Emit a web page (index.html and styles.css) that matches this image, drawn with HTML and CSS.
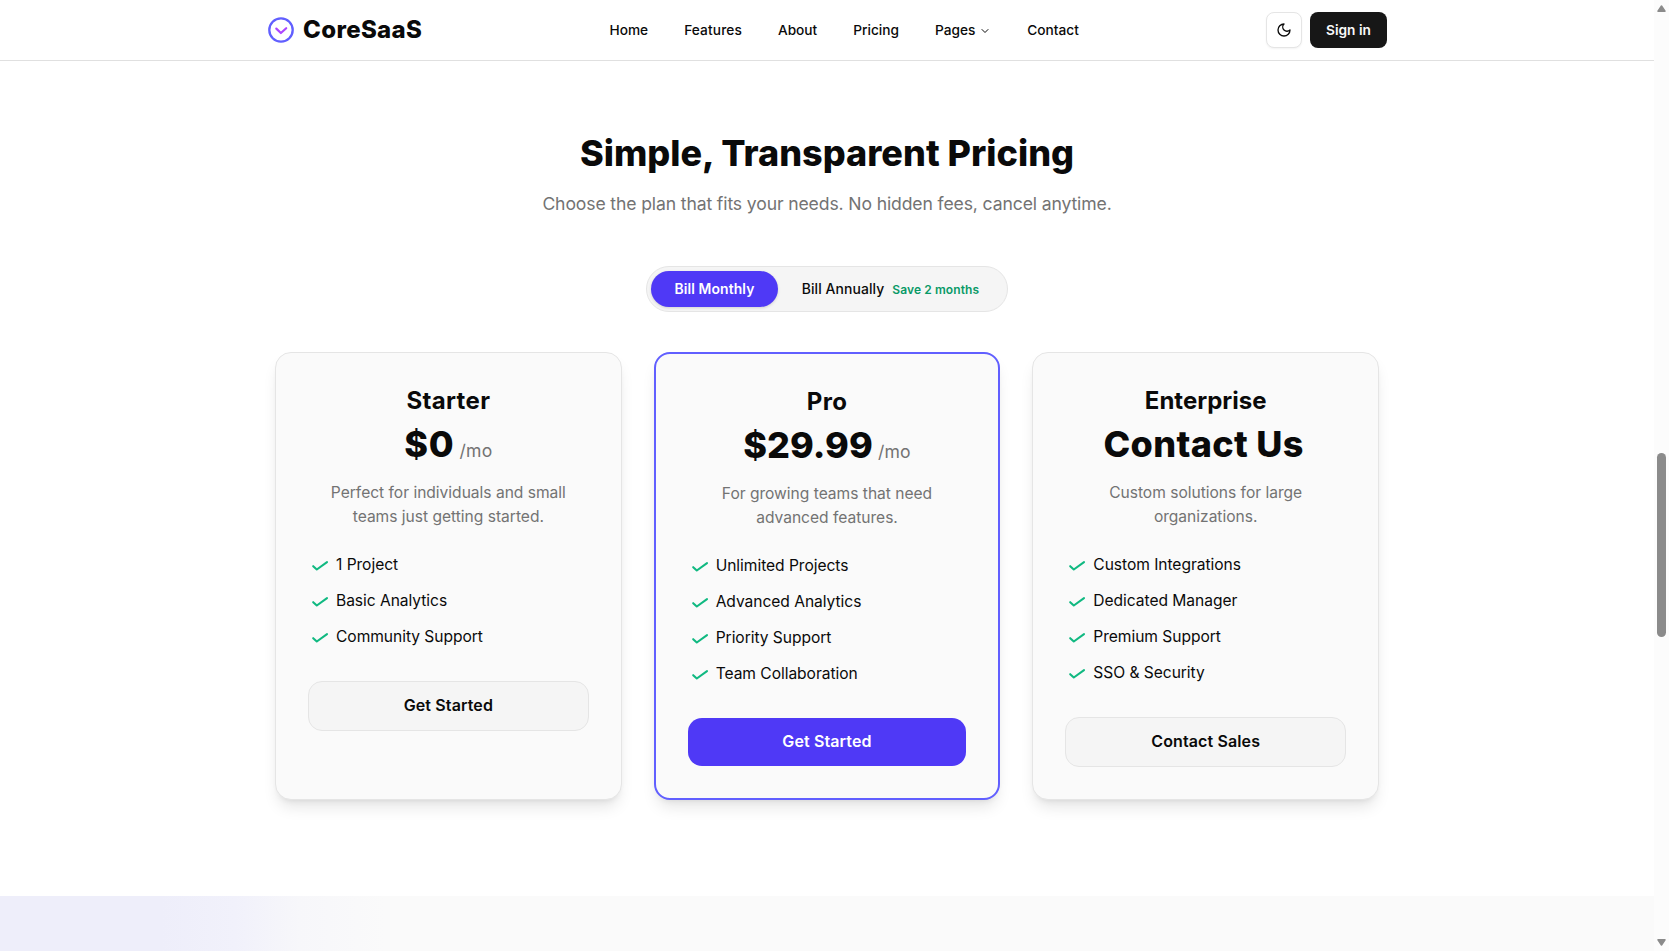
FILE: index.html
```
<!DOCTYPE html>
<html lang="en">
<head>
<meta charset="utf-8">
<title>CoreSaaS</title>
<link rel="stylesheet" href="styles.css">
</head>
<body>
<svg width="0" height="0" class="sprite" aria-hidden="true">
  <symbol id="check" viewBox="0 0 20 20">
    <path d="M3.2 11.2l3.6 3.3L17 7.2" fill="none" stroke="currentColor" stroke-width="2.1" stroke-linecap="round" stroke-linejoin="round"/>
  </symbol>
</svg>
<div class="window">
  <div class="page">
    <header class="header">
      <div class="header-inner">
        <a class="logo">
          <svg width="28" height="28" viewBox="0 0 28 28" fill="none" stroke-linecap="round" stroke-linejoin="round">
            <circle cx="14" cy="14" r="11.7" stroke="#615fff" stroke-width="2.3"/>
            <path d="M9.3 12.6l4.6 4.4 5.3-4.8" stroke="#ad46ff" stroke-width="2.2"/>
          </svg>
          <span>CoreSaaS</span>
        </a>
        <nav class="nav">
          <a>Home</a>
          <a class="wider">Features</a>
          <a class="tight">About</a>
          <a>Pricing</a>
          <a class="has-menu">Pages
            <svg width="12" height="12" viewBox="0 0 24 24" fill="none" stroke="currentColor" stroke-width="2" stroke-linecap="round" stroke-linejoin="round"><path d="M6 9l6 6 6-6"/></svg>
          </a>
          <a class="tight">Contact</a>
        </nav>
        <div class="actions">
          <button class="theme" aria-label="Toggle theme">
            <svg width="16" height="16" viewBox="0 0 24 24" fill="none" stroke="currentColor" stroke-width="2" stroke-linecap="round" stroke-linejoin="round"><path d="M12 3a6 6 0 0 0 9 9 9 9 0 1 1-9-9Z"/></svg>
          </button>
          <button class="signin">Sign in</button>
        </div>
      </div>
    </header>

    <section class="pricing">
      <h2 class="title">Simple, Transparent Pricing</h2>
      <p class="subtitle">Choose the plan that fits your needs. No hidden fees, cancel anytime.</p>
      <div class="toggle">
        <button class="bill active">Bill Monthly</button>
        <button class="bill">Bill Annually<span class="save">Save 2 months</span></button>
      </div>

      <div class="cards">
        <article class="card">
          <h3 class="plan">Starter</h3>
          <div class="price"><span class="zero">$0</span><span class="per">/mo</span></div>
          <p class="desc">Perfect for individuals and small<br>teams just getting started.</p>
          <ul class="features">
            <li><svg><use href="#check"/></svg>1 Project</li>
            <li><svg><use href="#check"/></svg>Basic Analytics</li>
            <li><svg><use href="#check"/></svg>Community Support</li>
          </ul>
          <button class="cta">Get Started</button>
        </article>

        <article class="card pro">
          <h3 class="plan">Pro</h3>
          <div class="price">$29.99<span class="per">/mo</span></div>
          <p class="desc">For growing teams that need<br>advanced features.</p>
          <ul class="features">
            <li><svg><use href="#check"/></svg>Unlimited Projects</li>
            <li><svg><use href="#check"/></svg>Advanced Analytics</li>
            <li><svg><use href="#check"/></svg>Priority Support</li>
            <li><svg><use href="#check"/></svg>Team Collaboration</li>
          </ul>
          <button class="cta primary">Get Started</button>
        </article>

        <article class="card">
          <h3 class="plan long">Enterprise</h3>
          <div class="price contact">Contact Us</div>
          <p class="desc">Custom solutions for large<br>organizations.</p>
          <ul class="features">
            <li><svg><use href="#check"/></svg>Custom Integrations</li>
            <li><svg><use href="#check"/></svg>Dedicated Manager</li>
            <li><svg><use href="#check"/></svg>Premium Support</li>
            <li><svg><use href="#check"/></svg>SSO &amp; Security</li>
          </ul>
          <button class="cta">Contact Sales</button>
        </article>
      </div>
    </section>

    <section class="next"></section>
  </div>

  <div class="scrollbar">
    <svg width="9" height="8" viewBox="0 0 9 8"><path d="M4.5 1L8 6.2H1z" fill="#8b8b8b" stroke="#8b8b8b" stroke-width="1.5" stroke-linejoin="round"/></svg>
    <div class="thumb"></div>
    <svg class="down" width="9" height="8" viewBox="0 0 9 8"><path d="M4.5 7L8 1.8H1z" fill="#8b8b8b" stroke="#8b8b8b" stroke-width="1.5" stroke-linejoin="round"/></svg>
  </div>
</div>
</body>
</html>
```

FILE: styles.css
```
* { box-sizing: border-box; margin: 0; padding: 0; }

body {
  font-family: Inter, "Liberation Sans", sans-serif;
  color: #0a0a0a;
  background: #fff;
  overflow: hidden;
}

button { font: inherit; color: inherit; border: 0; }

.sprite { display: none; }

.window { display: flex; height: 951px; }

.page { flex: 1; display: flex; flex-direction: column; }

/* Header */
.header { height: 61px; border-bottom: 1px solid #e0e0e0; }

.header-inner {
  width: 1120px;
  height: 60px;
  margin: 0 auto;
  display: flex;
  align-items: center;
  justify-content: space-between;
}

.logo {
  display: flex;
  align-items: center;
  gap: 8px;
  font-size: 24px;
  font-weight: 800;
  line-height: 28px;
  letter-spacing: 0.35px;
}

.nav {
  display: flex;
  align-items: center;
  gap: 36px;
  font-size: 13.7px;
  font-weight: 500;
  line-height: 20px;
  letter-spacing: 0;
}
.nav .wider { letter-spacing: 0.12px; }
.nav .tight { letter-spacing: -0.02px; }
.nav .has-menu { display: flex; align-items: center; gap: 4px; }
.has-menu svg { margin-top: 2px; }

.actions { display: flex; gap: 8px; }

.theme {
  width: 36px;
  height: 36px;
  display: grid;
  place-items: center;
  background: #fff;
  border: 1px solid #e5e5e5;
  border-radius: 8px;
  box-shadow: 0 1px 2px rgba(0, 0, 0, 0.05);
}

.signin {
  width: 77px;
  height: 36px;
  border-radius: 8px;
  background: #171717;
  color: #fafafa;
  font-size: 13.7px;
  font-weight: 600;
}

/* Pricing */
.pricing {
  height: 835px;
  padding-top: 72px;
  display: flex;
  flex-direction: column;
  align-items: center;
  text-align: center;
}

.title {
  font-size: 36px;
  font-weight: 800;
  line-height: 40px;
  letter-spacing: 0.02px;
}

.subtitle {
  margin-top: 17px;
  font-size: 17.6px;
  line-height: 28px;
  letter-spacing: -0.13px;
  color: #737373;
}

.toggle {
  margin-top: 48px;
  width: 362px;
  height: 46px;
  padding: 4px;
  display: flex;
  background: #f5f5f5;
  border: 1px solid #e5e5e5;
  border-radius: 23px;
}

.bill {
  flex: 1;
  height: 36px;
  padding-bottom: 1px;
  display: flex;
  align-items: center;
  justify-content: center;
  border-radius: 18px;
  background: none;
  font-size: 13.9px;
  font-weight: 500;
  letter-spacing: 0.1px;
}
.bill.active {
  flex: 0 0 127px;
  background: #4f39f6;
  color: #fff;
  font-weight: 600;
  box-shadow: 0 1px 3px rgba(0, 0, 0, 0.15);
}

.save {
  margin: 2px 0 0 8px;
  font-size: 12px;
  font-weight: 600;
  letter-spacing: 0.1px;
  color: #099a67;
}

.cards {
  width: 1104px;
  height: 448px;
  margin-top: 40px;
  display: grid;
  grid-template-columns: repeat(3, 1fr);
  gap: 32px;
}

.card {
  display: flex;
  flex-direction: column;
  padding: 32px;
  background: #fafafa;
  border: 1px solid #e5e5e5;
  border-radius: 16px;
  box-shadow: 0 10px 15px -3px rgba(0, 0, 0, 0.1), 0 4px 6px -4px rgba(0, 0, 0, 0.1);
}
.card.pro { border: 2px solid #615fff; }

.plan {
  height: 32px;
  font-size: 24px;
  font-weight: 700;
  line-height: 31px;
  letter-spacing: 0.35px;
}
.plan.long { letter-spacing: 0; }

.price {
  height: 40px;
  margin-top: 8px;
  font-size: 36px;
  font-weight: 800;
  line-height: 38px;
  letter-spacing: 0.1px;
}
.price.contact { letter-spacing: 0.35px; padding-right: 4px; }
.price .zero { letter-spacing: 0.8px; }

.per {
  margin-left: 5px;
  font-size: 17.6px;
  font-weight: 400;
  line-height: 1;
  letter-spacing: 0.2px;
  color: #737373;
}

.desc {
  margin-top: 16px;
  font-size: 15.6px;
  line-height: 24px;
  letter-spacing: -0.02px;
  color: #737373;
}

.features {
  margin-top: 24px;
  display: grid;
  gap: 12px;
  list-style: none;
  text-align: left;
  font-size: 15.6px;
  line-height: 24px;
  letter-spacing: -0.05px;
}
.features li { display: flex; align-items: center; }
.features svg { width: 20px; height: 20px; margin: -1px 6px 0 2px; color: #10b981; }

.cta {
  height: 50px;
  margin-top: 32px;
  padding-bottom: 2px;
  border: 1px solid #e5e5e5;
  border-radius: 14px;
  background: #f5f5f5;
  font-size: 16px;
  font-weight: 600;
  letter-spacing: 0.12px;
}
.cta.primary {
  height: 48px;
  border: 0;
  background: #4f39f6;
  color: #fff;
}

/* Top edge of the following section, tinted by a soft glow on the left */
.next {
  flex: 1;
  background: linear-gradient(90deg, #eeeefa 0, #eeeefa 160px, #f1f1fb 235px, #f7f7fa 300px, #fafafa 385px);
}

/* Scrollbar */
.scrollbar {
  width: 15px;
  padding: 5px 3px;
  display: flex;
  flex-direction: column;
  background: #fcfcfc;
}
.thumb {
  height: 184px;
  margin-top: 440px;
  border-radius: 4.5px;
  background: #8b8b8b;
}
.scrollbar .down { margin-top: auto; }
```
